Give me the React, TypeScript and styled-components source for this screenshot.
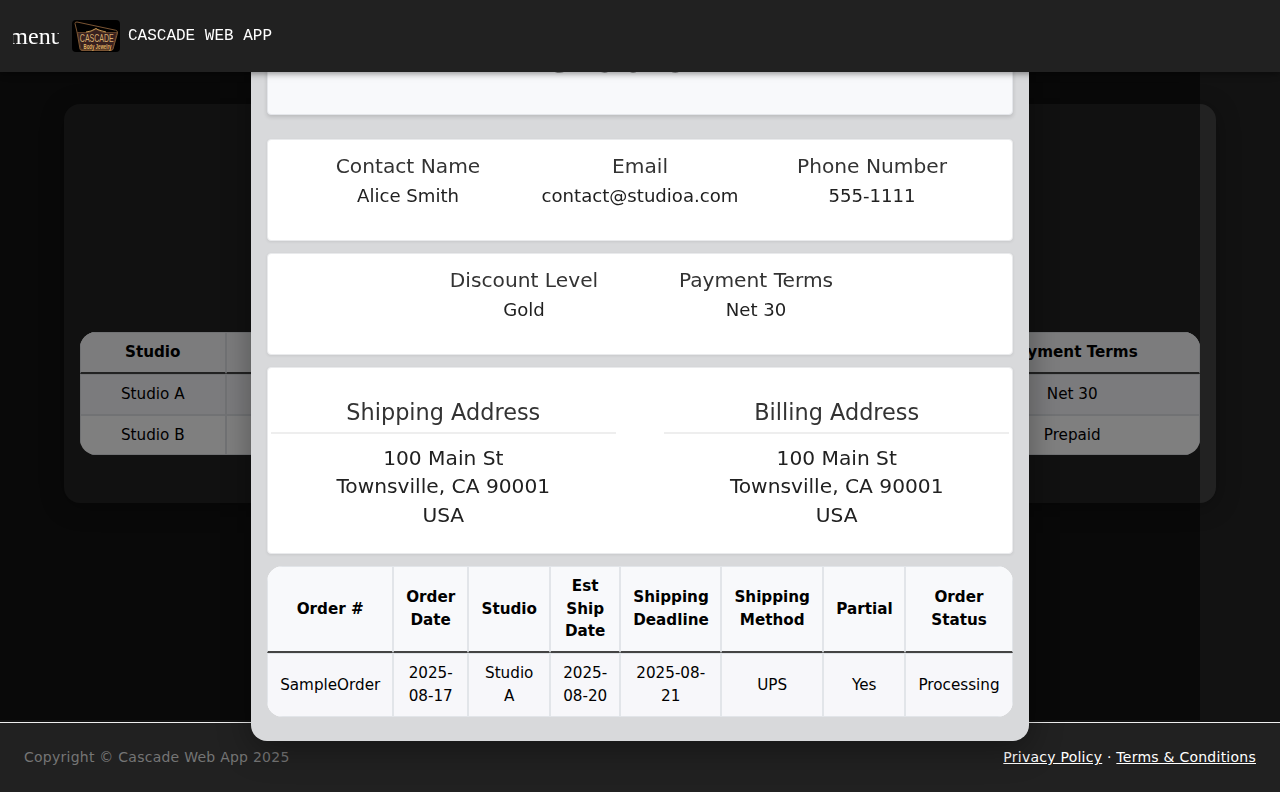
import React from "react";
import styled, { createGlobalStyle } from "styled-components";

const GlobalStyle = createGlobalStyle`
  * { box-sizing: border-box; }
  html, body { margin: 0; background: #121212; }
  body {
    font-family: "DejaVu Sans", sans-serif;
    font-size: 16px;
    line-height: 1.5;
    overflow: hidden;
  }
`;

const Page = styled.div`
  height: 792px;
  display: flex;
  flex-direction: column;
  overflow: hidden;
`;

const TopBar = styled.header`
  position: relative;
  z-index: 10;
  flex: 0 0 72px;
  display: flex;
  align-items: center;
  padding-left: 12px;
  background: #212121;
  color: #fff;
  box-shadow: 0 2px 4px -1px rgba(0, 0, 0, 0.2), 0 4px 5px rgba(0, 0, 0, 0.14),
    0 1px 10px rgba(0, 0, 0, 0.12);
`;

const MenuButton = styled.button`
  width: 48px;
  height: 48px;
  padding: 0;
  border: 0;
  overflow: hidden;
  clip-path: inset(0 1px);
  display: flex;
  align-items: center;
  justify-content: center;
  background: none;
  color: #fff;
  font: 24px/24px "Liberation Serif", serif;
`;

const Logo = styled.svg`
  width: 48px;
  height: 32px;
  margin: 0 8px 0 12px;
  border-radius: 4px;
`;

const AppName = styled.span`
  font: 16px/24px "Liberation Mono", monospace;
`;

const Main = styled.main`
  flex: 1;
  padding: 32px 64px 0;
`;

const StudioCard = styled.section`
  height: 399px;
  padding: 228px 16px 48px;
  border-radius: 16px;
  background: #222;
  box-shadow: 0 4px 24px rgba(0, 0, 0, 0.3);
`;

const Table = styled.table<{ $width: string }>`
  width: ${(p) => p.$width};
  table-layout: fixed;
  border-collapse: separate;
  border-spacing: 0;
  border-radius: 16px;
  overflow: hidden;
  background: #fff;
  color: #000;
  font-size: 15.2px;
  line-height: 22.8px;
  text-align: center;
`;

const HeadCell = styled.th`
  padding: 8px 12px;
  border: 1px solid #e2e5e9;
  border-bottom: 2px solid #444;
  background: #f8f9fb;
`;

const Cell = styled.td`
  padding: 8px 11px;
  border: 1px solid #e2e5e9;
`;

const Row = styled.tr`
  &:nth-child(odd) {
    background: #f7f7fa;
  }
`;

const Footer = styled.footer`
  flex: 0 0 70px;
  display: flex;
  align-items: center;
  justify-content: space-between;
  padding: 0 24px;
  border-top: 1px solid #eee;
  background: #212121;
  color: #fff;
  font-size: 14px;
  letter-spacing: 0.25px;
`;

const Copyright = styled.span`
  color: #757575;
`;

const FooterLink = styled.a`
  color: #fff;
  text-decoration: underline;
`;

const Scrim = styled.div`
  position: fixed;
  top: 0;
  left: 0;
  width: 1200px;
  height: 720px;
  background: rgba(0, 0, 0, 0.5);
`;

const DialogLayer = styled.div`
  position: fixed;
  inset: 0;
  z-index: 5;
  display: flex;
  align-items: flex-end;
  justify-content: center;
  padding-bottom: 51.2px;
`;

const Dialog = styled.div`
  width: 777.6px;
  padding: 24px 16px;
  display: flex;
  flex-direction: column;
  gap: 12px;
  border-radius: 16px;
  background: #d8d9db;
  box-shadow: 0 8px 32px rgba(0, 0, 0, 0.35);
`;

const TitleCard = styled.div`
  height: 150px;
  margin-bottom: 11.6px;
  padding-bottom: 30.6px;
  display: flex;
  align-items: flex-end;
  justify-content: center;
  border: 1px solid #e4e6ea;
  border-radius: 4px;
  background: #f8f9fb;
  box-shadow: 0 2px 4px rgba(0, 0, 0, 0.14);
`;

const Title = styled.h1`
  margin: 0;
  color: #333;
  font-size: 44.8px;
  line-height: 54px;
  font-weight: 400;
`;

const Section = styled.section<{ $height: number }>`
  height: ${(p) => p.$height}px;
  display: flex;
  justify-content: center;
  border: 1px solid #e9eaec;
  border-radius: 4px;
  background: #fff;
  box-shadow: 0 1px 3px rgba(0, 0, 0, 0.08);
`;

const Field = styled.div`
  width: 232px;
  padding-top: 10px;
  text-align: center;
`;

const Label = styled.div`
  color: #333;
  font-size: 20.2px;
  line-height: 32px;
`;

const Value = styled.div`
  color: #212121;
  font-size: 18.1px;
  line-height: 27px;
`;

const Addresses = styled.div`
  flex: 1;
  display: grid;
  grid-template-columns: 1fr 1fr;
  gap: 48px;
  padding: 27.8px 2.4px 0;
  text-align: center;
`;

const AddressTitle = styled.h2`
  margin: 0 0 9.6px;
  padding-bottom: 3.2px;
  border-bottom: 2px solid #eee;
  color: #333;
  font-size: 22.4px;
  font-weight: 400;
  line-height: 33px;
`;

const AddressLine = styled.div`
  color: #212121;
  font-size: 20.2px;
  line-height: 28.3px;
`;

const contact = [
  ["Contact Name", "Alice Smith"],
  ["Email", "contact@studioa.com"],
  ["Phone Number", "555-1111"],
];
const terms = [
  ["Discount Level", "Gold"],
  ["Payment Terms", "Net 30"],
];
const address = ["100 Main St", "Townsville, CA 90001", "USA"];

const orderColumns: [string, string, number][] = [
  ["Order #", "SampleOrder", 126],
  ["Order Date", "2025-08-17", 75],
  ["Studio", "Studio A", 82],
  ["Est Ship Date", "2025-08-20", 70],
  ["Shipping Deadline", "2025-08-21", 101],
  ["Shipping Method", "UPS", 102],
  ["Partial", "Yes", 82],
  ["Order Status", "Processing", 107.6],
];

const CascadeLogo = () => (
  <Logo viewBox="0 0 48 32">
    <rect width="48" height="32" fill="#000" />
    <path d="M5 12 3 3.5Q3 1.8 5 2L43.5 10.2Q46 10.8 45.5 13L41 29Q40.5 30.5 39 30.5H10Q8.5 30.5 8 29Z" fill="none" stroke="#7a5433" strokeWidth="1" />
    <path d="M5.5 12.5H17L21 10.5 24 9 27 10.5 31 12.5H45L40.5 29.5H9Z" fill="#38211f" stroke="#8a6038" strokeWidth=".6" />
    <path d="m14 12 5-1 3-1.5 2-1 2 1.2 3 1 5 1.3" fill="none" stroke="#c79855" strokeWidth="1" />
    <text x="24.8" y="22" textAnchor="middle" textLength="34" lengthAdjust="spacingAndGlyphs" fontFamily="Liberation Sans, sans-serif" fontSize="10.5" fill="#d6ad70">CASCADE</text>
    <text x="25.5" y="28.7" textAnchor="middle" textLength="28" lengthAdjust="spacingAndGlyphs" fontFamily="Liberation Sans, sans-serif" fontWeight="700" fontSize="7" fill="#e2b665">Body Jewelry</text>
  </Logo>
);

const Fields = ({ items }: { items: string[][] }) => (
  <Section $height={102.2}>
    {items.map(([label, value]) => (
      <Field key={label}>
        <Label>{label}</Label>
        <Value>{value}</Value>
      </Field>
    ))}
  </Section>
);

const AddressBlock = ({ title }: { title: string }) => (
  <div>
    <AddressTitle>{title}</AddressTitle>
    {address.map((line) => (
      <AddressLine key={line}>{line}</AddressLine>
    ))}
  </div>
);

export default function App() {
  return (
    <Page>
      <GlobalStyle />
      <TopBar>
        <MenuButton>menu</MenuButton>
        <CascadeLogo />
        <AppName>CASCADE WEB APP</AppName>
      </TopBar>
      <Main>
        <StudioCard>
          <Table $width="1120px">
            <colgroup>
              <col style={{ width: 145.5 }} />
              <col />
              <col style={{ width: 255.5 }} />
            </colgroup>
            <thead>
              <tr>
                <HeadCell>Studio</HeadCell>
                <HeadCell />
                <HeadCell>Payment Terms</HeadCell>
              </tr>
            </thead>
            <tbody>
              <Row>
                <Cell>Studio A</Cell>
                <Cell />
                <Cell>Net 30</Cell>
              </Row>
              <Row>
                <Cell>Studio B</Cell>
                <Cell />
                <Cell>Prepaid</Cell>
              </Row>
            </tbody>
          </Table>
        </StudioCard>
      </Main>
      <Footer>
        <Copyright>Copyright © Cascade Web App 2025</Copyright>
        <span>
          <FooterLink>Privacy Policy</FooterLink> · <FooterLink>Terms &amp; Conditions</FooterLink>
        </span>
      </Footer>
      <Scrim />
      <DialogLayer>
        <Dialog>
          <TitleCard>
            <Title>Studio A</Title>
          </TitleCard>
          <Fields items={contact} />
          <Fields items={terms} />
          <Section $height={186.4}>
            <Addresses>
              <AddressBlock title="Shipping Address" />
              <AddressBlock title="Billing Address" />
            </Addresses>
          </Section>
          <Table $width="100%">
            <colgroup>
              {orderColumns.map(([name, , width]) => (
                <col key={name} style={{ width }} />
              ))}
            </colgroup>
            <thead>
              <tr>
                {orderColumns.map(([name]) => (
                  <HeadCell key={name}>{name}</HeadCell>
                ))}
              </tr>
            </thead>
            <tbody>
              <Row>
                {orderColumns.map(([name, value]) => (
                  <Cell key={name}>{value}</Cell>
                ))}
              </Row>
            </tbody>
          </Table>
        </Dialog>
      </DialogLayer>
    </Page>
  );
}
